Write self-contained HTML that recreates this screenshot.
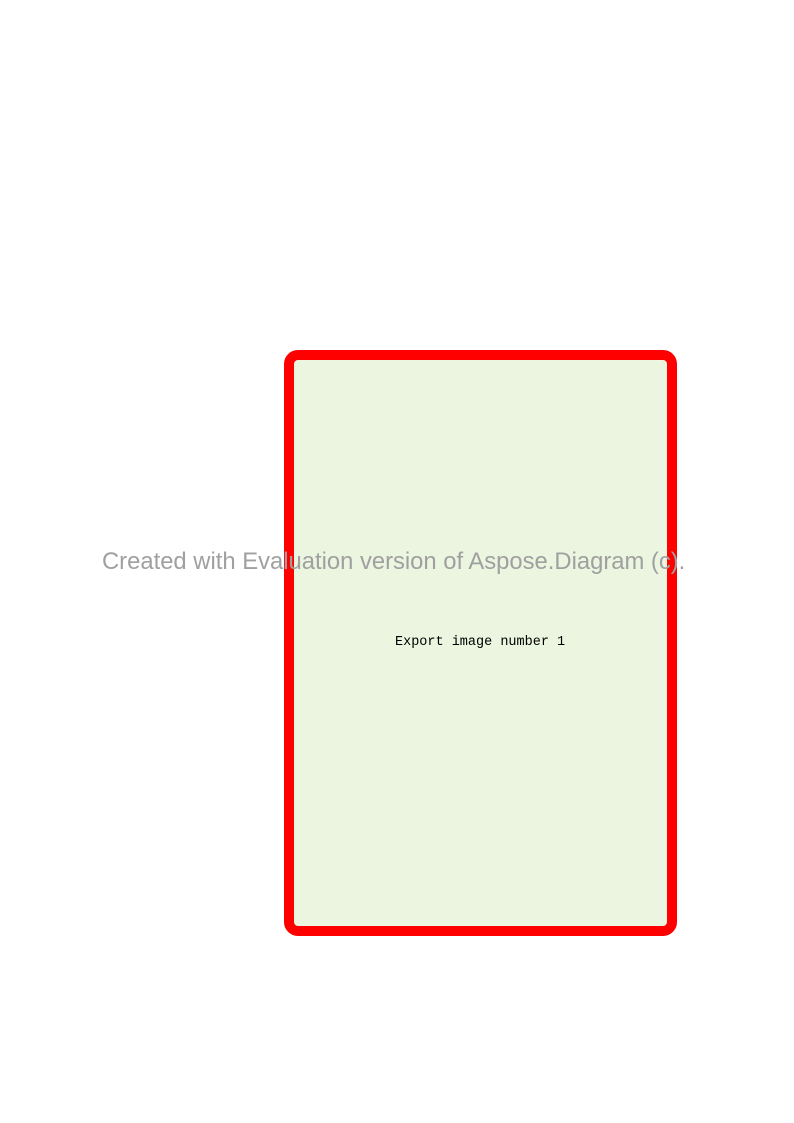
<!DOCTYPE html>
<html><head><style>
html,body{margin:0;padding:0;background:#fff;width:794px;height:1123px;overflow:hidden;position:relative}
.box{position:absolute;left:284px;top:350px;width:373px;height:566px;border:10px solid #ff0000;border-radius:14px;background:#ebf5df}
.t{position:absolute;left:395px;top:635px;font-family:"Liberation Mono",monospace;font-size:13.5px;color:#000;white-space:nowrap}
.w{position:absolute;left:102px;top:548px;font-family:"Liberation Sans",sans-serif;font-size:23.8px;color:#a0a0a0;white-space:nowrap}
</style></head><body>
<div class="box"></div>
<div class="t">Export image number 1</div>
<div class="w">Created with Evaluation version of Aspose.Diagram (c).</div>
</body></html>
